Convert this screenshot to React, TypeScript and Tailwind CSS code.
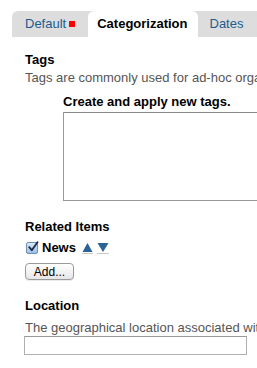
import React from "react";

export default function App() {
  return (
    <div
      className="w-[257px] h-[368px] overflow-hidden bg-white text-[13px] text-black"
      style={{ fontFamily: '"Liberation Sans", Arial, Helvetica, sans-serif' }}
    >
      <div className="pt-[11px] pl-[12px]">
        <div className="flex h-[26px] bg-[#dddddd] rounded-tl-[6px] leading-[26px]">
          <div className="flex items-center pl-[13px] pr-[13px] text-[#205c90]">
            <span>Default</span>
            <span className="ml-[3px] inline-block w-[6px] h-[6px] bg-[#ff0000]" />
          </div>
          <div className="bg-white rounded-t-[6px] pl-[9px] pr-[10px] font-bold">
            Categorization
          </div>
          <div className="pl-[12px] pr-[12px] text-[#205c90]">Dates</div>
        </div>
      </div>

      <div className="pl-[25px] leading-[16px]">
        <div className="mt-[15px] font-bold">Tags</div>
        <div className="mt-[2px] text-[#555] whitespace-nowrap">
          Tags are commonly used for ad-hoc organization of content.
        </div>
        <div className="ml-[38px] mt-[8px]">
          <div className="font-bold whitespace-nowrap">Create and apply new tags.</div>
          <div className="mt-[2px] h-[89px] w-[240px] border border-[#999] border-t-[#888] bg-white" />
        </div>

        <div className="mt-[18px] font-bold">Related Items</div>
        <div className="mt-[4px] flex items-center h-[18px]">
          <span className="relative inline-flex w-[12px] h-[12px] ml-[1px] rounded-[2px] border border-[#6f8fb3] bg-gradient-to-b from-[#dbe9f8] to-[#9cc0e6] items-center justify-center">
            <svg width="12" height="12" viewBox="0 0 12 12" className="absolute left-[0px] top-[-2px]">
              <path d="M2.2 6.2 L4.8 9.2 L10.5 1.2" fill="none" stroke="#1b2a44" strokeWidth="1.8" strokeLinecap="round" strokeLinejoin="round" />
            </svg>
          </span>
          <span className="ml-[4px] font-bold">News</span>
          <span className="ml-[6px] inline-block border-b border-[#c8c8c8] leading-[12px] text-[#2a6496] text-[13px] px-[0px]">
            <svg width="11" height="11" viewBox="0 0 11 11" className="block">
              <path d="M5.5 1 L10.5 10 L0.5 10 Z" fill="#2a6496" />
            </svg>
          </span>
          <span className="ml-[4px] inline-block border-b border-[#c8c8c8]">
            <svg width="12" height="11" viewBox="0 0 12 11" className="block">
              <path d="M0.5 1 L11.5 1 L6 10 Z" fill="#2a6496" />
            </svg>
          </span>
        </div>
        <div className="mt-[6px]">
          <button className="h-[17px] w-[49px] rounded-[4px] border border-[#9a9a9a] bg-gradient-to-b from-white to-[#e6e6e6] text-[12px] leading-[14px] text-black shadow-[0_1px_0_rgba(0,0,0,0.08)]">
            Add...
          </button>
        </div>

        <div className="mt-[18px] font-bold">Location</div>
        <div className="mt-[6px] text-[#555] whitespace-nowrap">
          The geographical location associated with the item, if applicable.
        </div>
        <div className="h-[19px] w-[223px] -ml-[1px] border border-[#b0b0b0] border-t-[#9a9a9a] bg-white" />
      </div>
    </div>
  );
}
